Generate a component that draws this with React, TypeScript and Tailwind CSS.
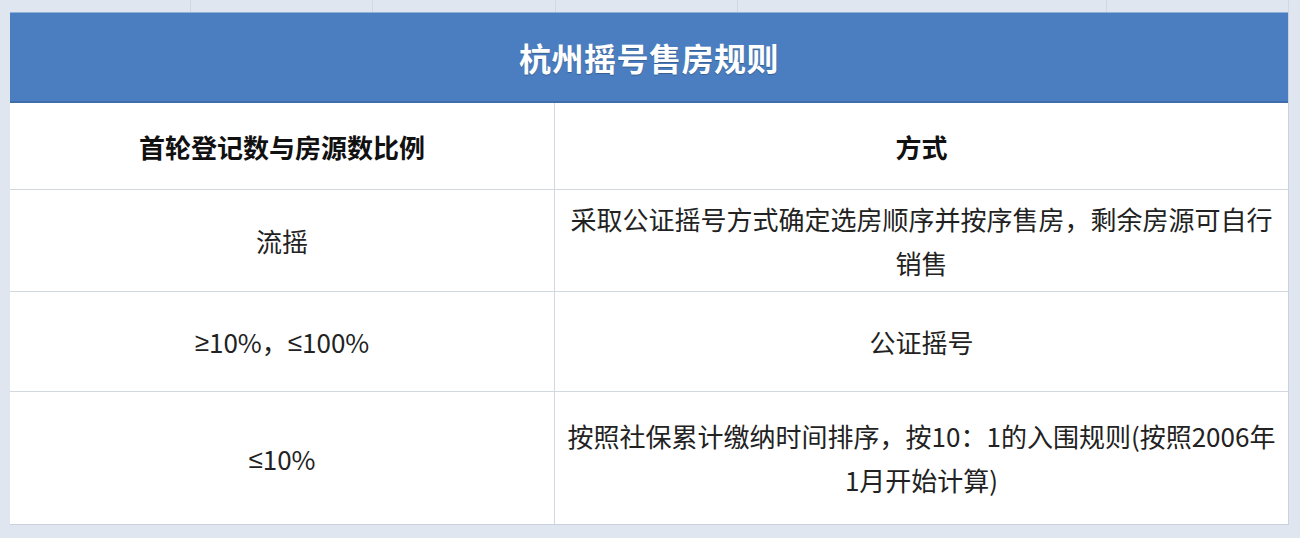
const rows = [
  { ratio: ["流摇"], mode: ["采取公证摇号方式确定选房顺序并按序售房，剩余房源可自行", "销售"], h: "h-[102px]" },
  { ratio: ["≥", "10%，", "≤", "100%"], mode: ["公证摇号"], h: "h-[100px]" },
  { ratio: ["≤", "10%"], mode: ["按照社保累计缴纳时间排序，按10：1的入围规则(按照2006年", "1月开始计算)"], h: "h-[132px]" },
];

const stripCells = ["w-[191px]", "w-[182px]", "w-[183px]", "w-[182px]", "w-[369px]", "w-[182px]"];

// the CJK font draws ≥ and ≤ slanted, the screenshot has the plain latin shape
function Ratio({ parts }: { parts: string[] }) {
  return (
    <>
      {parts.map((p, i) =>
        p === "≥" || p === "≤" ? (
          <span key={i} className="font-['Noto_Sans',sans-serif]">
            {p}
          </span>
        ) : (
          <span key={i}>{p}</span>
        )
      )}
    </>
  );
}

export default function App() {
  return (
    <div className="h-[538px] w-[1300px] overflow-hidden bg-[#dfe6f0] font-['Noto_Sans_CJK_SC','Noto_Sans',sans-serif]">
      <div className="flex h-[12px]">
        {stripCells.map((w, i) => (
          <div key={i} className={`${w} h-full border-r border-[#cfd8e4]`} />
        ))}
      </div>

      <div className="ml-[10px] w-[1279px] border-r border-b border-[#c9d2de] bg-white">
        <div className="flex h-[91px] items-center justify-center border-t border-[#8fb0d8] border-b-2 border-b-[#3f6da9] bg-[#4a7ec0]">
          <h1 className="text-[32px] font-bold tracking-[0.5px] text-white [text-shadow:0_1px_1px_rgba(0,0,0,0.25)]">
            杭州摇号售房规则
          </h1>
        </div>

        <div className="grid h-[87px] grid-cols-[545px_1fr] border-b border-[#d3d8e0]">
          <div className="flex items-center justify-center border-r border-[#d3d8e0] text-[26px] font-bold text-[#111]">
            首轮登记数与房源数比例
          </div>
          <div className="flex items-center justify-center text-[26px] font-bold text-[#111]">方式</div>
        </div>

        {rows.map((row, i) => (
          <div
            key={i}
            className={`grid ${row.h} grid-cols-[545px_1fr] ${i < rows.length - 1 ? "border-b border-[#d3d8e0]" : ""}`}
          >
            <div className="flex items-center justify-center border-r border-[#d3d8e0] text-[26px] text-[#222]">
              <Ratio parts={row.ratio} />
            </div>
            <div className="flex flex-col items-center justify-center text-[26px] leading-[44px] text-[#222]">
              {row.mode.map((line, j) => (
                <span key={j} className="whitespace-nowrap">
                  {line}
                </span>
              ))}
            </div>
          </div>
        ))}
      </div>
    </div>
  );
}
